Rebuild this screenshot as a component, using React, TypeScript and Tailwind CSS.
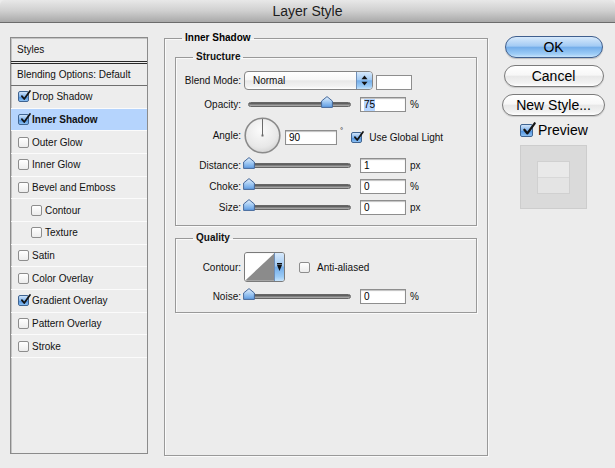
import React from "react";

const FONT = "font-['Liberation_Sans',Arial,sans-serif]";

const AQUA =
  "bg-[linear-gradient(#d7e9fb,#a3cbf4_45%,#74aeea_52%,#9dccf6_85%,#c6e3fb)]";
const GLOSS =
  "bg-[linear-gradient(#ffffff,#f7f7f7_45%,#e8e8e8_52%,#f2f2f2_85%,#ffffff)]";

function Check({ checked, big }: { checked?: boolean; big?: boolean }) {
  const size = big ? "w-[13px] h-[13px]" : "w-[11px] h-[11px]";
  return (
    <span
      className={`relative inline-block shrink-0 rounded-[2px] border ${size} ${
        checked
          ? "border-[#3f6491] bg-[linear-gradient(#cfe3f9,#7fb3ec_50%,#4f92e0_55%,#8cc0f2)]"
          : "border-[#8d8d8d] bg-[linear-gradient(#ffffff,#ececec)]"
      }`}
    >
      {checked && (
        <svg
          className={`absolute ${big ? "left-[1px] top-[-3px] w-[14px] h-[14px]" : "left-[1px] top-[-2px] w-[11px] h-[11px]"}`}
          viewBox="0 0 13 13"
          overflow="visible"
        >
          <path
            d="M2.2 7.2 L5 10.6 L11.8 1.2"
            fill="none"
            stroke="#141414"
            strokeWidth="2.1"
            strokeLinecap="round"
            strokeLinejoin="round"
          />
        </svg>
      )}
    </span>
  );
}

function Slider({ thumb }: { thumb: string }) {
  return (
    <span className="relative inline-block w-[103px] h-[5px] rounded-full border border-[#666] bg-[linear-gradient(#4f4f4f,#8c8c8c_60%,#b5b5b5)]">
      <svg
        className={`absolute top-[-7px] w-[12px] h-[12px] ${thumb}`}
        viewBox="0 0 12 12"
      >
        <defs>
          <linearGradient id="thumbFill" x1="0" y1="0" x2="0" y2="1">
            <stop offset="0" stopColor="#e6f1fc" />
            <stop offset="0.5" stopColor="#9fc8f2" />
            <stop offset="1" stopColor="#5d9be2" />
          </linearGradient>
        </defs>
        <polygon
          points="6,0.6 11.4,5 11.4,11.4 0.6,11.4 0.6,5"
          fill="url(#thumbFill)"
          stroke="#47699a"
          strokeWidth="1"
          strokeLinejoin="round"
        />
      </svg>
    </span>
  );
}

function Field({ value, w = "w-[46px]", selected }: { value: string; w?: string; selected?: boolean }) {
  return (
    <span
      className={`inline-flex items-center ${w} h-[15px] bg-white border border-[#8e8e8e] shadow-[inset_0_1px_1px_rgba(0,0,0,0.25)] pl-[3px] text-[10px] leading-[12px] text-black`}
    >
      <span className={selected ? "bg-[#b5d5ff]" : ""}>{value}</span>
    </span>
  );
}

function SliderRow({
  label,
  value,
  unit,
  thumb,
  className,
}: {
  label: string;
  value: string;
  unit: string;
  thumb: string;
  className: string;
}) {
  return (
    <div className={`flex items-center h-[15px] ${className}`}>
      <span className="w-[65px] text-right">{label}</span>
      <span className="ml-[7px] flex items-center">
        <Slider thumb={thumb} />
      </span>
      <span className="ml-[9px]">
        <Field value={value} selected={value === "75"} />
      </span>
      <span className="ml-[4px] text-[10px]">{unit}</span>
    </div>
  );
}

const STYLE_ROWS: { label: string; checked?: boolean; active?: boolean; indent?: boolean }[] = [
  { label: "Drop Shadow", checked: true },
  { label: "Inner Shadow", checked: true, active: true },
  { label: "Outer Glow" },
  { label: "Inner Glow" },
  { label: "Bevel and Emboss" },
  { label: "Contour", indent: true },
  { label: "Texture", indent: true },
  { label: "Satin" },
  { label: "Color Overlay" },
  { label: "Gradient Overlay", checked: true },
  { label: "Pattern Overlay" },
  { label: "Stroke" },
];

function StylesList() {
  return (
    <div className="mt-[14px] ml-[10px] w-[138px] h-[417px] border border-[#8b8b8b] shadow-[inset_1px_1px_0_#c4c4c4] bg-[#ededed] flex flex-col text-[10px] text-[#111]">
      <div className="h-[26px] flex items-center pl-[6px] border-b-[3px] border-double border-[#2a2a2a]">
        Styles
      </div>
      <div className="h-[22px] flex items-center pl-[6px] border-b border-[#6f6f6f]">
        Blending Options: Default
      </div>
      {STYLE_ROWS.map((r) => (
        <div
          key={r.label}
          className={`h-[22.67px] flex items-center border-b border-[#fbfbfb] ${
            r.indent ? "pl-[20px]" : "pl-[7px]"
          } ${r.active ? "bg-[#b5d4fd] font-bold" : ""}`}
        >
          <Check checked={r.checked} />
          <span className="ml-[3px]">{r.label}</span>
        </div>
      ))}
    </div>
  );
}

function BlendSelect() {
  return (
    <span className={`flex w-[129px] h-[19px] rounded-[4px] border border-[#858585] ${GLOSS} overflow-hidden`}>
      <span className="flex-1 flex items-center pl-[8px] text-[10px]">Normal</span>
      <span className={`w-[16px] flex items-center justify-center border-l border-[#6f8fb8] ${AQUA}`}>
        <svg width="7" height="11" viewBox="0 0 7 11">
          <polygon points="3.5,0.5 6.5,4.2 0.5,4.2" fill="#111" />
          <polygon points="3.5,10.5 6.5,6.8 0.5,6.8" fill="#111" />
        </svg>
      </span>
    </span>
  );
}

function AngleDial() {
  return (
    <svg width="37" height="37" viewBox="0 0 37 37">
      <defs>
        <radialGradient id="dialFill" cx="0.45" cy="0.35" r="0.7">
          <stop offset="0" stopColor="#fbfbfb" />
          <stop offset="0.7" stopColor="#e8e8e8" />
          <stop offset="1" stopColor="#cfcfcf" />
        </radialGradient>
      </defs>
      <circle cx="18.5" cy="18.5" r="17.3" fill="url(#dialFill)" stroke="#8a8a8a" strokeWidth="1.6" />
      <line x1="18.5" y1="18.5" x2="18.5" y2="2" stroke="#6b6b6b" strokeWidth="1" />
      <rect x="17.5" y="17.5" width="2" height="2" fill="#6b6b6b" />
    </svg>
  );
}

function ContourPicker() {
  return (
    <span className="flex w-[41px] h-[30px] rounded-[3px] border border-[#7a7a7a] overflow-hidden">
      <svg width="30" height="28" viewBox="0 0 30 28">
        <rect width="30" height="28" fill="#ffffff" />
        <polygon points="0,28 30,0 30,28" fill="#8b8b8b" />
      </svg>
      <span className={`w-[10px] flex items-center justify-center border-l border-[#6f8fb8] ${AQUA}`}>
        <svg width="5" height="8" viewBox="0 0 5 8">
          <rect x="0" y="0" width="5" height="1.5" fill="#111" />
          <polygon points="0,2 5,2 2.5,8" fill="#111" />
        </svg>
      </span>
    </span>
  );
}

function Group({
  title,
  bold,
  className,
  children,
}: {
  title: string;
  bold?: boolean;
  className?: string;
  children: React.ReactNode;
}) {
  return (
    <fieldset className={`border border-[#999] shadow-[inset_1px_1px_0_#fafafa,1px_1px_0_#fafafa] ${className ?? ""}`}>
      <legend className={`ml-[17px] px-[3px] text-[10px] leading-[12px] ${bold ? "font-bold" : ""}`}>
        {title}
      </legend>
      {children}
    </fieldset>
  );
}

function InnerShadowPanel() {
  return (
    <Group title="Inner Shadow" bold className="mt-[9px] ml-[16px] w-[324px] h-[424px]">
      <div className="px-[10px] text-[10px] text-[#111]">
        <Group title="Structure" bold className="mt-[7px] pb-[10px]">
          <div className="flex items-center h-[19px] mt-[8px]">
            <span className="w-[65px] text-right">Blend Mode:</span>
            <span className="ml-[3px]">
              <BlendSelect />
            </span>
            <span className="ml-[3px] mt-[4px] w-[36px] h-[15px] bg-white border border-[#8e8e8e]" />
          </div>
          <SliderRow label="Opacity:" value="75" unit="%" thumb="left-[72px]" className="mt-[7px]" />
          <div className="flex items-center h-[37px] mt-[5px]">
            <span className="w-[65px] text-right">Angle:</span>
            <span className="ml-[3px] flex">
              <AngleDial />
            </span>
            <span className="ml-[4px] mt-[4px]">
              <Field value="90" w="w-[52px]" />
            </span>
            <span className="ml-[3px] self-start mt-[10px] text-[8px] leading-[8px]">°</span>
            <span className="ml-[8px] mt-[3px] flex items-center">
              <Check checked />
              <span className="ml-[7px]">Use Global Light</span>
            </span>
          </div>
          <SliderRow label="Distance:" value="1" unit="px" thumb="left-[-6px]" className="mt-[4px]" />
          <SliderRow label="Choke:" value="0" unit="%" thumb="left-[-6px]" className="mt-[6px]" />
          <SliderRow label="Size:" value="0" unit="px" thumb="left-[-6px]" className="mt-[6px]" />
        </Group>
        <Group title="Quality" bold className="mt-[6px] pb-[8px]">
          <div className="flex items-center h-[30px] mt-[8px]">
            <span className="w-[65px] text-right">Contour:</span>
            <span className="ml-[3px]">
              <ContourPicker />
            </span>
            <span className="ml-[14px] flex items-center">
              <Check />
              <span className="ml-[7px]">Anti-aliased</span>
            </span>
          </div>
          <SliderRow label="Noise:" value="0" unit="%" thumb="left-[-6px]" className="mt-[7px]" />
        </Group>
      </div>
    </Group>
  );
}

function ActionColumn() {
  return (
    <div className="ml-[13px] mt-[13px] w-[105px] flex flex-col items-center text-[14px] text-black">
      <button className={`w-[98px] h-[22px] rounded-full border border-[#3f5f8e] ${AQUA} shadow-[0_1px_1px_rgba(0,0,0,0.2)]`}>
        OK
      </button>
      <button className={`mt-[7px] w-[100px] h-[22px] rounded-full border border-[#7b7b7b] ${GLOSS} shadow-[0_1px_1px_rgba(0,0,0,0.15)]`}>
        Cancel
      </button>
      <button className={`mt-[7px] w-[103px] h-[22px] rounded-full border border-[#7b7b7b] ${GLOSS} shadow-[0_1px_1px_rgba(0,0,0,0.15)]`}>
        New Style...
      </button>
      <div className="self-start ml-[19px] mt-[6px] flex items-center h-[16px]">
        <Check checked big />
        <span className="ml-[5px] leading-[16px]">Preview</span>
      </div>
      <div className="self-start ml-[19px] mt-[7px] w-[67px] h-[64px] bg-[#dadada] border border-[#cdcdcd] flex items-center justify-center">
        <div className="w-[33px] h-[33px] flex flex-col border border-[#d0d0d0]">
          <div className="flex-1 bg-[#e9e9e9] border-b border-[#d8d8d8]" />
          <div className="flex-1 bg-[#e4e4e4]" />
        </div>
      </div>
    </div>
  );
}

export default function App() {
  return (
    <div className={`w-[615px] h-[468px] bg-[#ececec] overflow-hidden ${FONT}`}>
      <div className="h-[23px] flex items-center justify-center bg-[linear-gradient(#e8e8e8,#cfcfcf_50%,#a9a9a9)] border-b border-[#6c6c6c] rounded-t-[5px]">
        <span className="text-[14px] text-[#1c1c1c]">Layer Style</span>
      </div>
      <div className="flex items-start">
        <StylesList />
        <InnerShadowPanel />
        <ActionColumn />
      </div>
    </div>
  );
}
